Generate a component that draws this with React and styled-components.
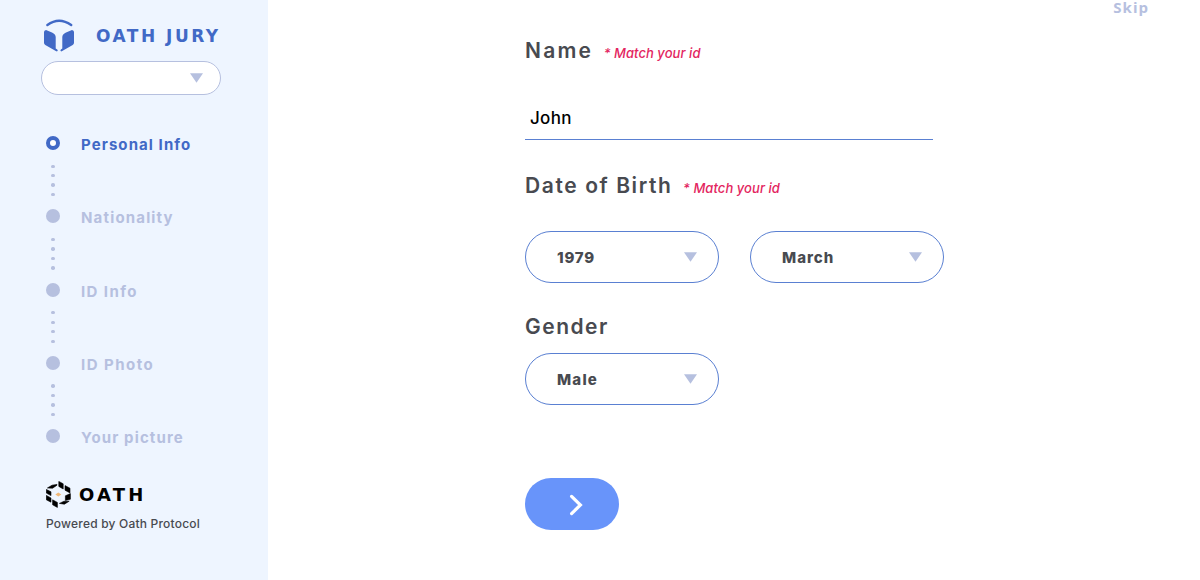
import React from "react";
import styled, { createGlobalStyle } from "styled-components";

const colors = {
  primary: "#4169c6",
  outline: "#5a80d2",
  muted: "#b6c0df",
  sidebar: "#eef5ff",
  text: "#484a50",
  hint: "#e32560",
  button: "#6894fa",
};

const steps = [
  { label: "Personal Info", spacing: 1.08, active: true },
  { label: "Nationality", spacing: 1.17 },
  { label: "ID Info", spacing: 1.4 },
  { label: "ID Photo", spacing: 1.48 },
  { label: "Your picture", spacing: 1.12 },
];

export default function App() {
  return (
    <Page>
      <GlobalStyle />
      <Sidebar>
        <Brand>
          <JuryLogo />
          <BrandName>OATH JURY</BrandName>
        </Brand>
        <AccountSelect>
          <Arrow />
        </AccountSelect>
        <StepList>
          {steps.map((step, i) => (
            <Step key={step.label}>
              <Rail>
                <Bullet $active={step.active} />
                {i < steps.length - 1 && (
                  <Dots>
                    <Dot />
                    <Dot />
                    <Dot />
                    <Dot />
                  </Dots>
                )}
              </Rail>
              <StepLabel $active={step.active} $spacing={step.spacing}>
                {step.label}
              </StepLabel>
            </Step>
          ))}
        </StepList>
        <Protocol>
          <ProtocolLogo />
          <ProtocolName>OATH</ProtocolName>
        </Protocol>
        <Powered>Powered by Oath Protocol</Powered>
      </Sidebar>
      <Main>
        <Skip>Skip</Skip>
        <Form>
          <Heading>
            <Title $spacing={2.2}>Name</Title>
            <Hint>* Match your id</Hint>
          </Heading>
          <NameField>John</NameField>
          <Heading>
            <Title $spacing={1.6}>Date of Birth</Title>
            <Hint>* Match your id</Hint>
          </Heading>
          <Selects $top={31}>
            <Select value="1979" spacing={0.8} />
            <Select value="March" spacing={1} />
          </Selects>
          <GenderHeading>
            <Title $spacing={1.5}>Gender</Title>
          </GenderHeading>
          <Selects $top={12}>
            <Select value="Male" spacing={1.2} />
          </Selects>
          <NextButton aria-label="Next">
            <svg width="14" height="22" viewBox="0 0 14 22" fill="none">
              <path
                d="M2.6 2.4 L11.4 11 L2.6 19.6"
                stroke="white"
                strokeWidth="3.2"
                strokeLinecap="round"
              />
            </svg>
          </NextButton>
        </Form>
      </Main>
    </Page>
  );
}

function Select({ value, spacing }) {
  return (
    <SelectBox>
      <SelectValue $spacing={spacing}>{value}</SelectValue>
      <Arrow />
    </SelectBox>
  );
}

function Arrow() {
  return (
    <svg width="13" height="10" viewBox="0 0 13 10">
      <path d="M0 0.3 H13 L6.5 9.7 Z" fill={colors.muted} />
    </svg>
  );
}

function JuryLogo() {
  return (
    <svg width="32" height="34" viewBox="0 0 32 34">
      <path
        d="M4.4 6 Q16 -2.6 28.2 6"
        fill="none"
        stroke={colors.primary}
        strokeWidth="2.4"
        strokeLinecap="round"
      />
      <g fill={colors.primary}>
        <path d="M1 13 Q1 11.4 3 11 L9 13.4 Q12.7 15 12.7 18 V29.6 Q14.8 30.5 14.8 31.6 Q14.4 33 12.8 32 L2.3 26 Q1 25.2 1 23.8 Z" />
        <path d="M31 13 Q31 11.4 29 11 L23 13.4 Q19.3 15 19.3 18 V29.6 Q17.4 30.5 17.4 31.6 Q17.8 33 19.2 32 L29.7 26 Q31 25.2 31 23.8 Z" />
      </g>
    </svg>
  );
}

function ProtocolLogo() {
  return (
    <svg width="25" height="27" viewBox="0 0 25 27">
      <path
        d="M6 4.2 L11 3.4 L11 4.2 L6.6 7.2 L1.4 7 Z M12.8 0.4 L17.2 2.8 V8 L12.8 5.4 Z M19 4.6 L24 7.2 V12 L19 9.2 Z M0.3 8.4 L5 10.8 V14.6 L0.3 12 Z M0.3 14.4 L5 17 V21.2 L0.3 18.8 Z M24.4 12.6 V18.2 L19.4 19.4 V14.8 Z M6.6 18.8 L11.4 21.4 V26.4 L6.6 23.8 Z M13.4 22.4 L18 20.2 L23.2 20.2 L18.4 23.2 Z"
        stroke="black"
        strokeWidth="0.6"
      />
      <path d="M12.3 11.4 L15.3 13.4 L12.3 15.4 L9.3 13.4 Z" fill="#f0b878" />
    </svg>
  );
}

const GlobalStyle = createGlobalStyle`
  * {
    box-sizing: border-box;
  }

  body {
    margin: 0;
    overflow: hidden;
    font-family: Inter, "Liberation Sans", sans-serif;
    background: white;
  }
`;

const Page = styled.div`
  display: flex;
  height: 580px;
  overflow: hidden;
`;

const Sidebar = styled.aside`
  display: flex;
  flex-direction: column;
  flex: none;
  width: 268px;
  padding: 19px 0 0 41px;
  background: ${colors.sidebar};
`;

const Brand = styled.div`
  display: flex;
  align-items: center;
  height: 34px;
  padding-left: 2px;
`;

const BrandName = styled.span`
  margin-left: 21px;
  font: bold 17px/32px "DejaVu Sans", sans-serif;
  letter-spacing: 2.5px;
  white-space: nowrap;
  color: ${colors.primary};
`;

const AccountSelect = styled.div`
  display: flex;
  align-items: center;
  justify-content: flex-end;
  width: 180px;
  height: 34px;
  margin-top: 8px;
  padding-right: 17px;
  border: 1px solid ${colors.muted};
  border-radius: 17px;
  background: white;
`;

const StepList = styled.div`
  height: 344px;
  margin-top: 41px;
  padding-left: 5px;
`;

const Step = styled.div`
  display: flex;
  height: 73.3px;

  &:last-child {
    height: 30px;
  }
`;

const Rail = styled.div`
  display: flex;
  flex-direction: column;
  align-items: center;
  width: 14px;
`;

const Bullet = styled.div`
  flex: none;
  width: 14px;
  height: 14px;
  border: ${(props) =>
    props.$active ? `4.3px solid ${colors.primary}` : "none"};
  border-radius: 50%;
  background: ${(props) => (props.$active ? "white" : colors.muted)};
`;

const Dots = styled.div`
  display: flex;
  flex-direction: column;
  gap: 6.1px;
  margin-top: 14.5px;
`;

const Dot = styled.div`
  width: 3.4px;
  height: 3.4px;
  border-radius: 50%;
  background: ${colors.muted};
`;

const StepLabel = styled.span`
  margin-left: 21px;
  font-size: 15px;
  font-weight: 650;
  line-height: 18px;
  letter-spacing: ${(props) => props.$spacing}px;
  white-space: nowrap;
  color: ${(props) => (props.$active ? colors.primary : colors.muted)};
`;

const Protocol = styled.div`
  display: flex;
  align-items: center;
  height: 27px;
  padding-left: 5px;
  margin-top: 1px;
`;

const ProtocolName = styled.span`
  margin-left: 8px;
  font: bold 18px/26px "DejaVu Sans", sans-serif;
  letter-spacing: 3.2px;
  color: black;
`;

const Powered = styled.span`
  margin: 8px 0 0 5px;
  font-size: 12px;
  font-weight: 500;
  line-height: 16px;
  letter-spacing: 0.2px;
  white-space: nowrap;
  color: ${colors.text};
`;

const Main = styled.main`
  flex: 1;
  display: flex;
  flex-direction: column;
`;

const Skip = styled.span`
  align-self: flex-end;
  height: 18px;
  margin-right: 51px;
  font: bold 15px/14px "Open Sans", sans-serif;
  letter-spacing: 1px;
  color: ${colors.muted};
`;

const Form = styled.div`
  width: 420px;
  margin: 20px 0 0 257px;
`;

const Heading = styled.div`
  display: flex;
  align-items: baseline;
  height: 27px;
`;

const GenderHeading = styled(Heading)`
  margin-top: 31px;
`;

const Title = styled.h2`
  margin: 0;
  font-size: 21px;
  font-weight: 600;
  line-height: 26px;
  letter-spacing: ${(props) => props.$spacing}px;
  white-space: nowrap;
  color: ${colors.text};
`;

const Hint = styled.em`
  margin-left: 10.5px;
  font-size: 13px;
  font-weight: 500;
  letter-spacing: 0.06px;
  white-space: nowrap;
  color: ${colors.hint};
`;

const NameField = styled.div`
  width: 408px;
  height: 50px;
  margin: 25px 0 33px;
  padding: 17px 5px 0;
  border-bottom: 1px solid ${colors.outline};
  font-size: 17px;
  font-weight: 450;
  line-height: 22px;
  letter-spacing: 0.3px;
  color: black;
`;

const Selects = styled.div`
  display: flex;
  gap: 31px;
  margin-top: ${(props) => props.$top}px;
`;

const SelectBox = styled.div`
  display: flex;
  align-items: center;
  justify-content: space-between;
  width: 194px;
  height: 52px;
  padding: 0 21px 0 31px;
  border: 1px solid ${colors.outline};
  border-radius: 26px;
`;

const SelectValue = styled.span`
  padding-top: 1px;
  font-size: 15px;
  font-weight: 800;
  letter-spacing: ${(props) => props.$spacing}px;
  color: ${colors.text};
`;

const NextButton = styled.button`
  display: flex;
  align-items: center;
  justify-content: center;
  width: 94px;
  height: 52px;
  margin-top: 73px;
  padding: 2px 0 0 8px;
  border: 0;
  border-radius: 26px;
  background: ${colors.button};
`;
